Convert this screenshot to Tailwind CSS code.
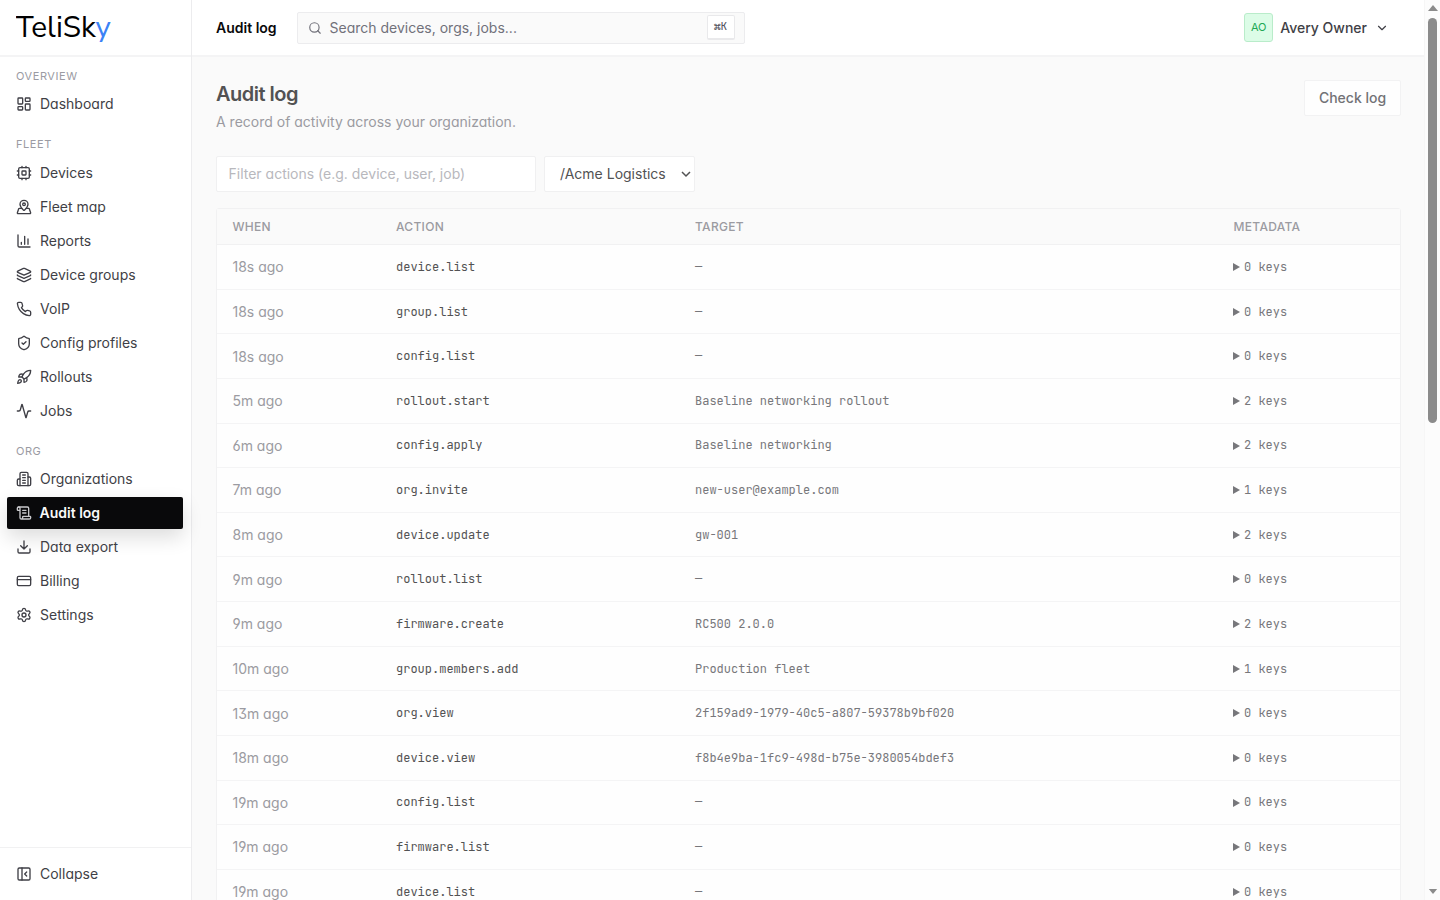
<!DOCTYPE html>
<html lang="en">
<head>
<meta charset="utf-8">
<title>Audit log</title>
<script src="https://cdn.jsdelivr.net/npm/@tailwindcss/browser@4"></script>
</head>
<body class="flex h-[900px] w-[1440px] overflow-hidden bg-[#fafafa] font-['Inter',sans-serif] text-sm text-[#3f3f46] [font-feature-settings:'cv11','ss01']">

<aside class="flex w-48 shrink-0 flex-col border-r border-[#ececee] bg-white">
  <div class="flex h-[57px] shrink-0 items-center border-b-2 border-[#f4f4f5] pl-4">
    <svg width="98" height="40" viewBox="0 0 98 40" aria-label="TeliSky"><text x="-0.3" y="28.7" textLength="95" lengthAdjust="spacingAndGlyphs" font-family="'Nunito Sans', Nunito, Lato, sans-serif" font-size="29.3"><tspan class="fill-black">TeliSk</tspan><tspan class="fill-[#3b82f6]">y</tspan></text></svg>
  </div>
  <nav id="nav" class="flex grow flex-col px-2 pt-[10.75px]"></nav>
  <div class="flex h-[53px] items-center gap-2 border-t border-[#f1f1f2] px-4" id="collapse"></div>
</aside>

<div class="flex min-w-0 grow flex-col">
  <header class="flex h-[57px] shrink-0 items-center border-b-2 border-[#f4f4f5] bg-white pr-[35px] pl-6">
    <div class="w-[80.5px] font-semibold text-[#09090b]">Audit log</div>
    <div class="flex h-8 w-[448px] items-center rounded-xs border border-[#ececee] bg-[#fafafa] pr-[9px] pl-[10px] text-[#71717a]">
      <svg class="mr-2 size-[14px]" viewBox="0 0 24 24" fill="none" stroke="currentColor" stroke-width="2" stroke-linecap="round"><circle cx="11" cy="11" r="8"/><path d="m21 21-4.3-4.3"/></svg>
      <span>Search devices, orgs, jobs...</span>
      <kbd class="ml-auto flex h-[25px] w-[28px] items-center justify-center rounded-xs border border-b-2 border-[#e9e9eb] bg-white font-['JetBrains_Mono','DejaVu_Sans_Mono',monospace] text-[11px] text-[#52525b]">⌘K</kbd>
    </div>
    <div class="ml-auto flex items-center">
      <div class="flex size-[29px] items-center justify-center rounded-[3px] border border-[#b9ecca] bg-[#dcfce7] text-[11px] text-[#22a855]">AO</div>
      <span class="ml-[7px] font-medium">Avery Owner</span>
      <svg class="ml-2 size-[14px]" viewBox="0 0 24 24" fill="none" stroke="currentColor" stroke-width="2" stroke-linecap="round" stroke-linejoin="round"><path d="m6 9 6 6 6-6"/></svg>
    </div>
  </header>

  <main class="flex min-h-0 grow flex-col overflow-hidden pt-[23px] pr-[23px] pl-6">
    <div class="flex h-[76px] shrink-0 items-start justify-between">
      <div>
        <h1 class="text-xl leading-7 font-semibold tracking-[-0.5px] text-[#525253]">Audit log</h1>
        <p class="mt-1 text-[#9b9ba1]">A record of activity across your organization.</p>
      </div>
      <button class="h-9 w-[97px] rounded-xs border border-[#f2f2f3] bg-[#fefefe] font-medium text-[#727276]">Check log</button>
    </div>
    <div class="flex shrink-0 gap-2">
      <div class="flex h-9 w-80 items-center rounded-xs border border-[#f0f0f1] bg-white pl-[11.5px] text-[#b8b8bd]">Filter actions (e.g. device, user, job)</div>
      <div class="flex h-9 w-[151px] items-center justify-between rounded-xs border border-[#f0f0f1] bg-white pr-[3px] pl-[15px] text-[#525253]">/Acme Logistics
        <svg class="size-[10px]" viewBox="0 0 10 10" fill="none" stroke="currentColor" stroke-width="1.5"><path d="m1 3 4 4 4-4"/></svg>
      </div>
    </div>
    <div class="mt-4 flex w-[1185px] shrink-0 flex-col rounded-[3px] border border-[#f1f1f2] bg-[#fefefe]">
      <div class="grid h-9 grid-cols-[163.5px_299px_538.5px_1fr] items-center border-b border-[#f1f1f2] bg-[#fafafa] pl-[15.5px] text-xs font-medium tracking-[0.3px] text-[#9b9ba1]">
        <span>WHEN</span><span>ACTION</span><span>TARGET</span><span>METADATA</span>
      </div>
      <div id="rows"></div>
    </div>
  </main>
</div>

<div class="flex w-4 shrink-0 flex-col items-center justify-between border-l border-[#f6f6f6] bg-[#fcfcfc]">
  <div class="flex flex-col items-center">
    <svg class="mt-[5px] h-[6px] w-[10px] fill-[#8b8b8b]" viewBox="0 0 10 6"><path d="M0 6 5 0l5 6z"/></svg>
    <div class="mt-[7px] h-[405px] w-[9px] rounded-full bg-[#8b8b8b]"></div>
  </div>
  <svg class="mb-[6px] h-[5px] w-[10px] fill-[#8b8b8b]" viewBox="0 0 10 6"><path d="M0 0 5 6l5-6z"/></svg>
</div>

<script>
const icons = {
  dash: '<rect x="3" y="3" width="7" height="9" rx="1"/><rect x="14" y="3" width="7" height="5" rx="1"/><rect x="14" y="12" width="7" height="9" rx="1"/><rect x="3" y="16" width="7" height="5" rx="1"/>',
  cpu: '<rect x="4" y="4" width="16" height="16" rx="2"/><rect x="9" y="9" width="6" height="6" rx="1"/><path d="M15 2v2M15 20v2M2 15h2M2 9h2M20 15h2M20 9h2M9 2v2M9 20v2"/>',
  map: '<path d="M18 8c0 3.613-3.869 7.429-5.393 8.795a1 1 0 0 1-1.214 0C9.87 15.429 6 11.613 6 8a6 6 0 0 1 12 0"/><circle cx="12" cy="8" r="2"/><path d="M8.714 14h-3.71a1 1 0 0 0-.948.683l-2.004 6A1 1 0 0 0 3 22h18a1 1 0 0 0 .948-1.316l-2-6a1 1 0 0 0-.949-.684h-3.712"/>',
  chart: '<path d="M3 3v16a2 2 0 0 0 2 2h16M18 17V9M13 17V5M8 17v-3"/>',
  layers: '<path d="M12.83 2.18a2 2 0 0 0-1.66 0L2.6 6.08a1 1 0 0 0 0 1.83l8.58 3.91a2 2 0 0 0 1.66 0l8.58-3.9a1 1 0 0 0 0-1.83z"/><path d="M2 12a1 1 0 0 0 .58.91l8.6 3.91a2 2 0 0 0 1.65 0l8.58-3.9A1 1 0 0 0 22 12"/><path d="M2 17a1 1 0 0 0 .58.91l8.6 3.91a2 2 0 0 0 1.65 0l8.58-3.9A1 1 0 0 0 22 17"/>',
  phone: '<path d="M22 16.92v3a2 2 0 0 1-2.18 2 19.79 19.79 0 0 1-8.63-3.07 19.5 19.5 0 0 1-6-6 19.79 19.79 0 0 1-3.07-8.67A2 2 0 0 1 4.11 2h3a2 2 0 0 1 2 1.72 12.84 12.84 0 0 0 .7 2.81 2 2 0 0 1-.45 2.11L8.09 9.91a16 16 0 0 0 6 6l1.27-1.27a2 2 0 0 1 2.11-.45 12.84 12.84 0 0 0 2.81.7A2 2 0 0 1 22 16.92z"/>',
  shield: '<path d="M20 13c0 5-3.5 7.5-7.66 8.95a1 1 0 0 1-.67-.01C7.5 20.5 4 18 4 13V6a1 1 0 0 1 1-1c2 0 4.5-1.2 6.24-2.72a1.17 1.17 0 0 1 1.52 0C14.51 3.81 17 5 19 5a1 1 0 0 1 1 1z"/><path d="m9 12 2 2 4-4"/>',
  rocket: '<path d="M4.5 16.5c-1.5 1.26-2 5-2 5s3.74-.5 5-2c.71-.84.7-2.13-.09-2.91a2.18 2.18 0 0 0-2.91-.09z"/><path d="m12 15-3-3a22 22 0 0 1 2-3.95A12.88 12.88 0 0 1 22 2c0 2.72-.78 7.5-6 11a22.35 22.35 0 0 1-4 2z"/><path d="M9 12H4s.55-3.03 2-4c1.62-1.08 5 0 5 0"/><path d="M12 15v5s3.03-.55 4-2c1.08-1.62 0-5 0-5"/>',
  pulse: '<path d="M22 12h-2.48a2 2 0 0 0-1.93 1.46l-2.35 8.36a.25.25 0 0 1-.48 0L9.24 2.18a.25.25 0 0 0-.48 0l-2.35 8.36A2 2 0 0 1 4.49 12H2"/>',
  org: '<path d="M6 22V4a2 2 0 0 1 2-2h8a2 2 0 0 1 2 2v18Z"/><path d="M6 12H4a2 2 0 0 0-2 2v6a2 2 0 0 0 2 2h2M18 9h2a2 2 0 0 1 2 2v9a2 2 0 0 1-2 2h-2M10 6h4M10 10h4M10 14h4M10 18h4"/>',
  scroll: '<path d="M15 12h-5M15 8h-5M19 17V5a2 2 0 0 0-2-2H4"/><path d="M8 21h12a2 2 0 0 0 2-2v-1a1 1 0 0 0-1-1H11a1 1 0 0 0-1 1v1a2 2 0 1 1-4 0V5a2 2 0 1 0-4 0v2a1 1 0 0 0 1 1h3"/>',
  down: '<path d="M21 15v4a2 2 0 0 1-2 2H5a2 2 0 0 1-2-2v-4M7 10l5 5 5-5M12 15V3"/>',
  card: '<rect x="2" y="5" width="20" height="14" rx="2"/><path d="M2 10h20"/>',
  gear: '<path d="M9.671 4.136a2.34 2.34 0 0 1 4.659 0 2.34 2.34 0 0 0 3.319 1.915 2.34 2.34 0 0 1 2.33 4.033 2.34 2.34 0 0 0 0 3.831 2.34 2.34 0 0 1-2.33 4.033 2.34 2.34 0 0 0-3.319 1.915 2.34 2.34 0 0 1-4.659 0 2.34 2.34 0 0 0-3.32-1.915 2.34 2.34 0 0 1-2.33-4.033 2.34 2.34 0 0 0 0-3.831A2.34 2.34 0 0 1 6.35 6.051a2.34 2.34 0 0 0 3.319-1.915"/><circle cx="12" cy="12" r="3"/>',
  panel: '<rect x="3" y="3" width="18" height="18" rx="2"/><path d="M9 3v18M16 15l-3-3 3-3"/>'
};
const icon = n => `<svg class="size-4 shrink-0" viewBox="0 0 24 24" fill="none" stroke="currentColor" stroke-width="2" stroke-linecap="round" stroke-linejoin="round">${icons[n]}</svg>`;
const groups = [
  ['OVERVIEW', [['dash', 'Dashboard']]],
  ['FLEET', [['cpu', 'Devices'], ['map', 'Fleet map'], ['chart', 'Reports'], ['layers', 'Device groups'], ['phone', 'VoIP'], ['shield', 'Config profiles'], ['rocket', 'Rollouts'], ['pulse', 'Jobs']]],
  ['ORG', [['org', 'Organizations'], ['scroll', 'Audit log'], ['down', 'Data export'], ['card', 'Billing'], ['gear', 'Settings']]]
];
document.getElementById('nav').innerHTML = groups.map(([title, items]) =>
  `<section class="mb-4"><h2 class="mb-1 h-[16.5px] px-2 text-[11px] leading-[16.5px] tracking-[0.55px] text-[#9b9ba3]">${title}</h2><div class="flex flex-col gap-0.5">` +
  items.map(([i, t]) => t === 'Audit log'
    ? `<a class="-mr-px -ml-px flex h-8 w-[175.5px] items-center gap-2 rounded-xs bg-[#09090b] px-[8.5px] font-semibold text-[#fafafa] shadow-[0_8px_20px_rgba(0,0,0,0.14)]"><span class="text-[#c8c8cc]">${icon(i)}</span>${t}</a>`
    : `<a class="flex h-8 items-center gap-2 px-2">${icon(i)}${t}</a>`).join('') + '</div></section>').join('');
document.getElementById('collapse').innerHTML = icon('panel') + 'Collapse';

const rows = [
  ['18s', 'device.list', '—', 0], ['18s', 'group.list', '—', 0], ['18s', 'config.list', '—', 0],
  ['5m', 'rollout.start', 'Baseline networking rollout', 2], ['6m', 'config.apply', 'Baseline networking', 2],
  ['7m', 'org.invite', 'new-user@example.com', 1], ['8m', 'device.update', 'gw-001', 2], ['9m', 'rollout.list', '—', 0],
  ['9m', 'firmware.create', 'RC500 2.0.0', 2], ['10m', 'group.members.add', 'Production fleet', 1],
  ['13m', 'org.view', '2f159ad9-1979-40c5-a807-59378b9bf020', 0], ['18m', 'device.view', 'f8b4e9ba-1fc9-498d-b75e-3980054bdef3', 0],
  ['19m', 'config.list', '—', 0], ['19m', 'firmware.list', '—', 0], ['19m', 'device.list', '—', 0]
];
document.getElementById('rows').innerHTML = rows.map(([w, a, t, k]) =>
  `<div class="grid h-[44.625px] grid-cols-[163.5px_299px_538px_1fr] items-center border-b border-[#f4f4f5] pl-[15.5px] font-['JetBrains_Mono','DejaVu_Sans_Mono',monospace] text-[12px] text-[#77777b]">
    <span class="pt-px font-['Inter',sans-serif] text-sm text-[#9b9ba1]">${w} ago</span><span class="pt-[1.5px] text-[#525253]">${a}</span><span class="pt-[1.5px]">${t}</span>
    <span class="flex items-center gap-1 pt-[1.5px]"><svg class="mb-px h-2 w-[7px] fill-current" viewBox="0 0 7 8"><path d="M0 0l7 4-7 4z"/></svg>${k} keys</span></div>`).join('');
</script>
</body>
</html>
